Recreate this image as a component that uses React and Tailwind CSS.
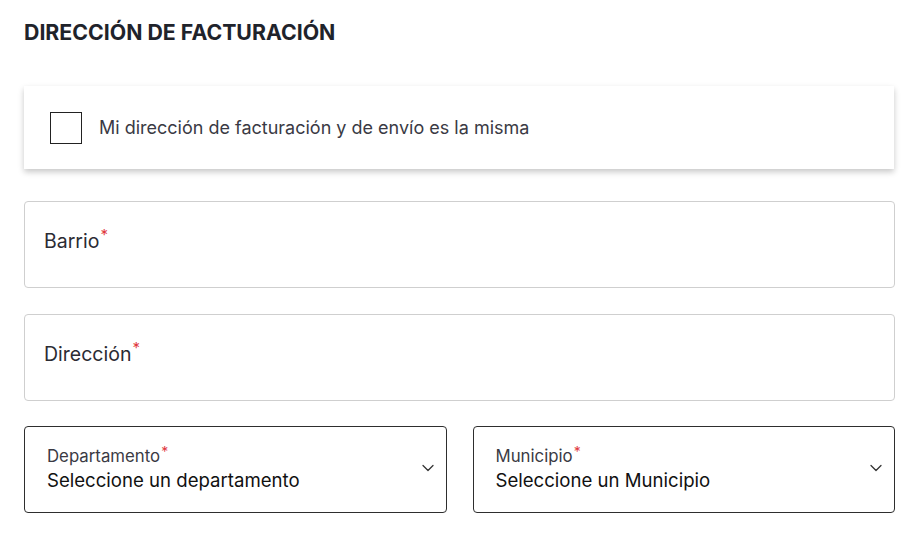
import { ChevronDown } from 'lucide-react'

function TextField({ label }) {
  return (
    <div className="h-[87px] rounded-[4px] border border-[#cfcfcf] bg-white flex items-center pl-[19px] pr-5">
      <span className="text-[19.5px] text-[#2b2b33] -mt-[6px]">
        {label}
        <span className="text-[#e0393e] align-top text-[15px] relative -top-[3px] ml-[1px]">*</span>
      </span>
    </div>
  )
}

function SelectField({ label, value }) {
  return (
    <div className="flex-1 h-[87px] rounded-[4px] border border-[#2e2e2e] bg-white flex items-center pl-[22px] pr-[8px]">
      <div className="flex-1 flex flex-col mt-[1px]">
        <span className="text-[16.8px] leading-[20px] text-[#3a3a44]">
          {label}
          <span className="text-[#e0393e] align-top text-[14px] relative -top-[4px] ml-[1px]">*</span>
        </span>
        <span className="text-[18.6px] leading-[29px] text-[#111]">{value}</span>
      </div>
      <ChevronDown className="w-[20px] h-[20px] text-[#333] mt-[-4px]" strokeWidth={1.5} />
    </div>
  )
}

export default function App() {
  return (
    <div className="min-h-screen bg-white font-['Inter','Liberation_Sans',sans-serif]">
      <div className="w-[895px] pl-6 pt-[18px]">
        <h2 className="text-[21.3px] leading-[28px] font-bold text-[#1f232b]">
          DIRECCIÓN DE FACTURACIÓN
        </h2>

        <div className="mt-[40px] h-[83px] bg-white shadow-[0_3px_6px_rgba(0,0,0,0.22)] flex items-center pl-[26px] w-[870px]">
          <div className="w-[32px] h-[32px] border border-[#222] mr-[17px]" />
          <span className="text-[18px] text-[#3a3a44]">Mi dirección de facturación y de envío es la misma</span>
        </div>

        <div className="mt-[32px] flex flex-col gap-[26px]">
          <TextField label="Barrio" />
          <TextField label="Dirección" />
          <div className="flex gap-[26px] -mt-[1px]">
            <SelectField label="Departamento" value="Seleccione un departamento" />
            <SelectField label="Municipio" value="Seleccione un Municipio" />
          </div>
        </div>
      </div>
    </div>
  )
}
